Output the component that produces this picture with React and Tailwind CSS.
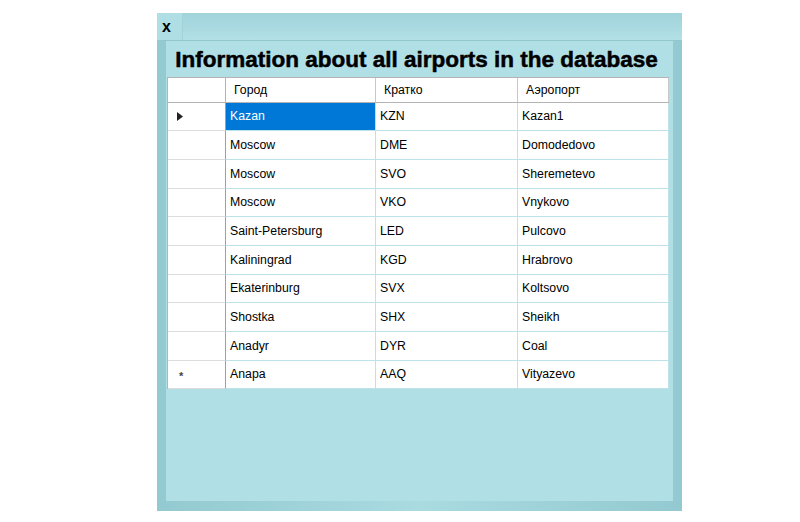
import React from "react";

const rows = [
  ["Kazan", "KZN", "Kazan1"],
  ["Moscow", "DME", "Domodedovo"],
  ["Moscow", "SVO", "Sheremetevo"],
  ["Moscow", "VKO", "Vnykovo"],
  ["Saint-Petersburg", "LED", "Pulcovo"],
  ["Kaliningrad", "KGD", "Hrabrovo"],
  ["Ekaterinburg", "SVX", "Koltsovo"],
  ["Shostka", "SHX", "Sheikh"],
  ["Anadyr", "DYR", "Coal"],
  ["Anapa", "AAQ", "Vityazevo"],
];

const headers = ["Город", "Кратко", "Аэропорт"];
const widths = ["w-[150px]", "w-[142px]", "w-[151px]"];

export default function App() {
  return (
    <div className="w-[800px] h-[522px] bg-white font-['Liberation_Sans',Arial,sans-serif]">
      <div className="pl-[157px] pt-[13px]">
        {/* window */}
        <div className="w-[525px] h-[498px] flex flex-col bg-gradient-to-r from-[#93c9d0] via-[#a9dbe1] to-[#93c9d0]">
          {/* title bar */}
          <div className="h-[28px] flex border-b border-[#92c6cd] bg-gradient-to-b from-[#a0d3da] to-[#b2e0e6]">
            <div className="w-[26px] flex items-center pl-[5px] bg-[#afdfe4] border-r border-[#a3d3da] text-[16px] font-bold text-black">
              x
            </div>
            <div className="flex-1" />
          </div>

          {/* body */}
          <div className="flex-1 flex flex-col px-[9px] pb-[10px]">
            <div className="flex-1 bg-[#b0dfe5] flex flex-col">
              <div className="h-[36px] flex items-center justify-center pt-[1px] pr-[6px] text-[22.5px] font-bold text-black [-webkit-text-stroke:0.5px_black]">
                Information about all airports in the database
              </div>

              <div className="ml-[1px] w-[502px] bg-white border-l border-t border-[#b4b4b4] text-[12.3px] text-black">
                {/* header row */}
                <div className="flex h-[24.5px] border-b border-[#b4b4b4]">
                  <div className="w-[58px] border-r border-[#b4b4b4]" />
                  {headers.map((h, i) => (
                    <div
                      key={h}
                      className={`${widths[i]} flex items-center pl-[8px] border-r border-[#c8c8c8]`}
                    >
                      {h}
                    </div>
                  ))}
                </div>

                {rows.map((r, ri) => (
                  <div key={ri} className="flex h-[28.7px]">
                    <div className="w-[58px] flex items-center pl-[8px] border-r border-b border-r-[#a0a0a0] border-b-[#dcdcdc]">
                      {ri === 0 && (
                        <svg width="8" height="11" viewBox="0 0 8 11">
                          <path d="M1 1 L7 5.5 L1 10 Z" fill="#222" />
                        </svg>
                      )}
                      {ri === rows.length - 1 && (
                        <span className="pl-[3px] pt-[3px] text-[11px] font-bold text-[#444] leading-none">*</span>
                      )}
                    </div>
                    {r.map((c, ci) => (
                      <div
                        key={ci}
                        className={`${widths[ci]} flex items-center pl-[4px] border-r border-b border-[#bde3e8] ${
                          ri === 0 && ci === 0 ? "bg-[#0078d7] text-white" : ""
                        }`}
                      >
                        {c}
                      </div>
                    ))}
                  </div>
                ))}
              </div>
            </div>
          </div>
        </div>
      </div>
    </div>
  );
}
